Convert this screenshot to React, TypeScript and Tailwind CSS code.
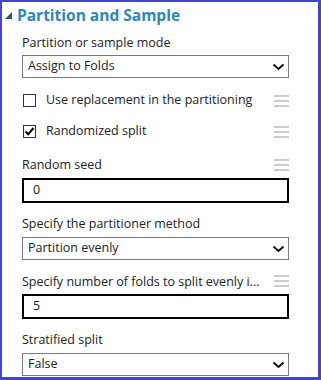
import React from "react";

const font = { fontFamily: '"Open Sans", "Noto Sans", sans-serif' };

function Handle() {
  return (
    <div className="flex flex-col gap-[3px] w-[15px]">
      <div className="h-[2px] bg-[#cccccc]" />
      <div className="h-[2px] bg-[#cccccc]" />
      <div className="h-[2px] bg-[#cccccc]" />
    </div>
  );
}

function Chevron() {
  return (
    <svg width="13" height="8" viewBox="0 0 13 8">
      <path d="M1.5 1.5 L6.5 6 L11.5 1.5" fill="none" stroke="#111" strokeWidth="2" />
    </svg>
  );
}

function Select({ value }: { value: string }) {
  return (
    <div className="h-[23px] border border-[#7a7a7a] flex items-center justify-between pl-[5px] pr-[3px] text-[12.5px] text-[#222]">
      <span>{value}</span>
      <Chevron />
    </div>
  );
}

function Input({ value }: { value: string }) {
  return (
    <div className="h-[25px] border-2 border-black flex items-center pl-[9px] text-[12.5px] text-[#222]">
      {value}
    </div>
  );
}

function Checkbox({ checked }: { checked: boolean }) {
  return (
    <div className="w-[13px] h-[13px] border border-[#333] bg-white flex items-center justify-center">
      {checked && (
        <svg width="11" height="11" viewBox="0 0 11 11">
          <path d="M1.5 5.5 L4.2 8.3 L9.5 2" fill="none" stroke="#000" strokeWidth="2" />
        </svg>
      )}
    </div>
  );
}

export default function App() {
  return (
    <div
      style={font}
      className="w-[321px] h-[380px] bg-white border-l-2 border-t-2 border-r-[3px] border-b-[3px] border-[#4444d4] overflow-hidden"
    >
      <div className="flex items-center h-[28px] pl-[2px]">
        <svg width="8" height="8" viewBox="0 0 8 8" className="ml-[1px] mr-[4px]">
          <polygon points="7,0 7,7 0,7" fill="#1e5d80" />
        </svg>
        <span className="text-[15.5px] font-bold text-[#2b88b8]">Partition and Sample</span>
      </div>
      <div className="pl-[20px] pr-[29px] text-[12.5px] text-[#222]">
        <div className="h-[25px] flex items-center pt-[2px]">Partition or sample mode</div>
        <Select value="Assign to Folds" />
        <div className="h-[31px] mt-[7px] flex items-center justify-between">
          <div className="flex items-center">
            <div className="ml-[1px] mr-[10px]"><Checkbox checked={false} /></div>
            <span>Use replacement in the partitioning</span>
          </div>
          <Handle />
        </div>
        <div className="h-[31px] flex items-center justify-between">
          <div className="flex items-center">
            <div className="ml-[1px] mr-[10px]"><Checkbox checked={true} /></div>
            <span>Randomized split</span>
          </div>
          <Handle />
        </div>
        <div className="h-[26px] mt-[5px] flex items-center justify-between">
          <span>Random seed</span>
          <Handle />
        </div>
        <Input value="0" />
        <div className="h-[34px] flex items-end pb-[3px]">Specify the partitioner method</div>
        <Select value="Partition evenly" />
        <div className="h-[34px] flex items-end pb-[2px] justify-between">
          <span>Specify number of folds to split evenly i...</span>
          <div className="mb-[5px]"><Handle /></div>
        </div>
        <Input value="5" />
        <div className="h-[34px] flex items-end pb-[3px]">Stratified split</div>
        <Select value="False" />
      </div>
    </div>
  );
}
